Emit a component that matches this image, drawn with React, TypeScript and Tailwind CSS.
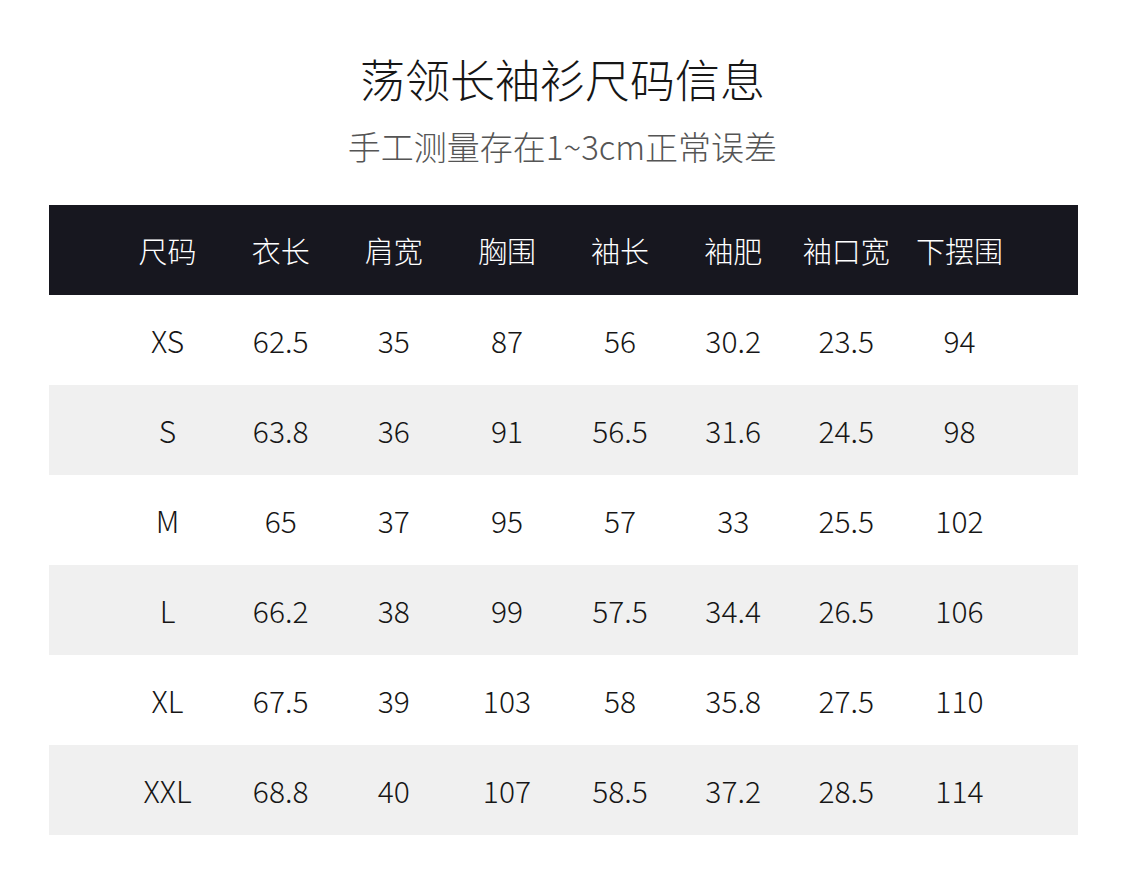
const headers = ["尺码", "衣长", "肩宽", "胸围", "袖长", "袖肥", "袖口宽", "下摆围"];

const rows = [
  ["XS", "62.5", "35", "87", "56", "30.2", "23.5", "94"],
  ["S", "63.8", "36", "91", "56.5", "31.6", "24.5", "98"],
  ["M", "65", "37", "95", "57", "33", "25.5", "102"],
  ["L", "66.2", "38", "99", "57.5", "34.4", "26.5", "106"],
  ["XL", "67.5", "39", "103", "58", "35.8", "27.5", "110"],
  ["XXL", "68.8", "40", "107", "58.5", "37.2", "28.5", "114"],
];

export default function App() {
  return (
    <div className="w-[1125px] h-[882px] bg-white font-['Noto_Sans_CJK_SC',sans-serif] font-light">
      {/* title */}
      <div className="pt-[56px] flex flex-col items-center">
        <h1 className="text-[45px] leading-none text-[#161616] font-light">
          荡领长袖衫尺码信息
        </h1>
        <p className="mt-[29px] text-[33px] leading-none text-[#555555]">
          手工测量存在1~3cm正常误差
        </p>
      </div>

      {/* table */}
      <div className="ml-[49px] w-[1029px] mt-[42px]">
        <div className="h-[90px] bg-[#17171f] grid grid-cols-8 items-center px-[62px]">
          {headers.map((h) => (
            <div key={h} className="text-center text-white text-[29px] leading-none">
              {h}
            </div>
          ))}
        </div>
        {rows.map((r, i) => (
          <div
            key={r[0]}
            className={
              "h-[90px] grid grid-cols-8 items-center px-[62px] " +
              (i % 2 === 1 ? "bg-[#f0f0f0]" : "bg-white")
            }
          >
            {r.map((v, j) => (
              <div key={j} className="text-center text-[#161616] text-[30px] leading-none">
                {v}
              </div>
            ))}
          </div>
        ))}
      </div>
    </div>
  );
}
